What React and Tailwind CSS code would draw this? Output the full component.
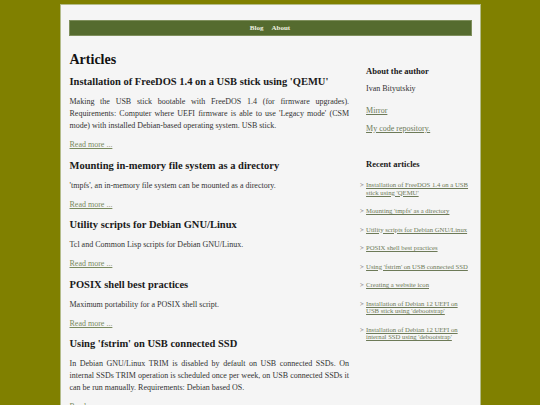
import React from 'react'

const articles = [
    {
        title: "Installation of FreeDOS 1.4 on a USB stick using 'QEMU'",
        summary: "Making the USB stick bootable with FreeDOS 1.4 (for firmware upgrades). Requirements: Computer where UEFI firmware is able to use 'Legacy mode' (CSM mode) with installed Debian-based operating system. USB stick.",
    },
    {
        title: 'Mounting in-memory file system as a directory',
        summary: "'tmpfs', an in-memory file system can be mounted as a directory.",
    },
    {
        title: 'Utility scripts for Debian GNU/Linux',
        summary: 'Tcl and Common Lisp scripts for Debian GNU/Linux.',
    },
    {
        title: 'POSIX shell best practices',
        summary: 'Maximum portability for a POSIX shell script.',
    },
    {
        title: "Using 'fstrim' on USB connected SSD",
        summary: 'In Debian GNU/Linux TRIM is disabled by default on USB connected SSDs. On internal SSDs TRIM operation is scheduled once per week, on USB connected SSDs it can be run manually. Requirements: Debian based OS.',
    },
]

const recent = [
    "Installation of FreeDOS 1.4 on a USB stick using 'QEMU'",
    "Mounting 'tmpfs' as a directory",
    'Utility scripts for Debian GNU/Linux',
    'POSIX shell best practices',
    "Using 'fstrim' on USB connected SSD",
    'Creating a website icon',
    "Installation of Debian 12 UEFI on USB stick using 'debootstrap'",
    "Installation of Debian 12 UEFI on internal SSD using 'debootstrap'",
]

const ArticleCard = ({ article }) => {
    return (
        <article className='flex flex-col gap-[7px] mb-[7.5px]'>
            <h2 className='text-[10.5px] leading-[14px] font-bold text-[#1a1a1a]'>{article.title}</h2>
            <p className='text-[8px] leading-[12px] text-[#333] text-justify'>{article.summary}</p>
            <p className='text-[8px] leading-[12px]'>
                <a href='#' className='text-[#7a8a5e] underline'>Read more ...</a>
            </p>
        </article>
    )
}

export default function App() {
    return (
        <div className="min-h-screen bg-[#808000] pt-1 font-['Liberation_Serif',serif]">
            <div className='mx-auto w-[421px] border border-[#b4bc8a] bg-[#f5f5f5] px-[8px] pt-[15px] pb-10'>
                <nav className='h-4 bg-[#556b2f] border border-[#7f8f5d] flex justify-center items-center gap-[8px] text-[7px] font-bold text-[#eef0e0]'>
                    <a href='#'>Blog</a>
                    <a href='#'>About</a>
                </nav>
                <div className='flex pl-[1px] mt-[15px]'>
                    <main className='w-[281px]'>
                        <h1 className='text-[14px] leading-[18px] font-bold text-[#111] mb-[6px]'>Articles</h1>
                        {articles.map((a) => <ArticleCard key={a.title} article={a} />)}
                    </main>
                    <aside className='ml-[17px] w-[106px] pt-[14px]'>
                        <h3 className='text-[8.5px] leading-[12px] font-bold text-[#1a1a1a]'>About the author</h3>
                        <p className='text-[8px] leading-[12px] text-[#333] mt-[6px]'>Ivan Bityutskiy</p>
                        <p className='text-[8px] leading-[12px] mt-[10px]'>
                            <a href='#' className='text-[#6d7a58] underline'>Mirror</a>
                        </p>
                        <p className='text-[8px] leading-[12px] mt-[6px]'>
                            <a href='#' className='text-[#6d7a58] underline'>My code repository.</a>
                        </p>
                        <h3 className='text-[8.5px] leading-[12px] font-bold text-[#1a1a1a] mt-[23px]'>Recent articles</h3>
                        <ul className='mt-[11px] flex flex-col gap-[11px]'>
                            {recent.map((r) => (
                                <li key={r} className='relative text-[6.7px] leading-[7.5px]'>
                                    <span className='absolute -left-[6px] top-0 text-[#666]'>&gt;</span>
                                    <a href='#' className='text-[#6d7a58] underline'>{r}</a>
                                </li>
                            ))}
                        </ul>
                    </aside>
                </div>
            </div>
        </div>
    )
}
